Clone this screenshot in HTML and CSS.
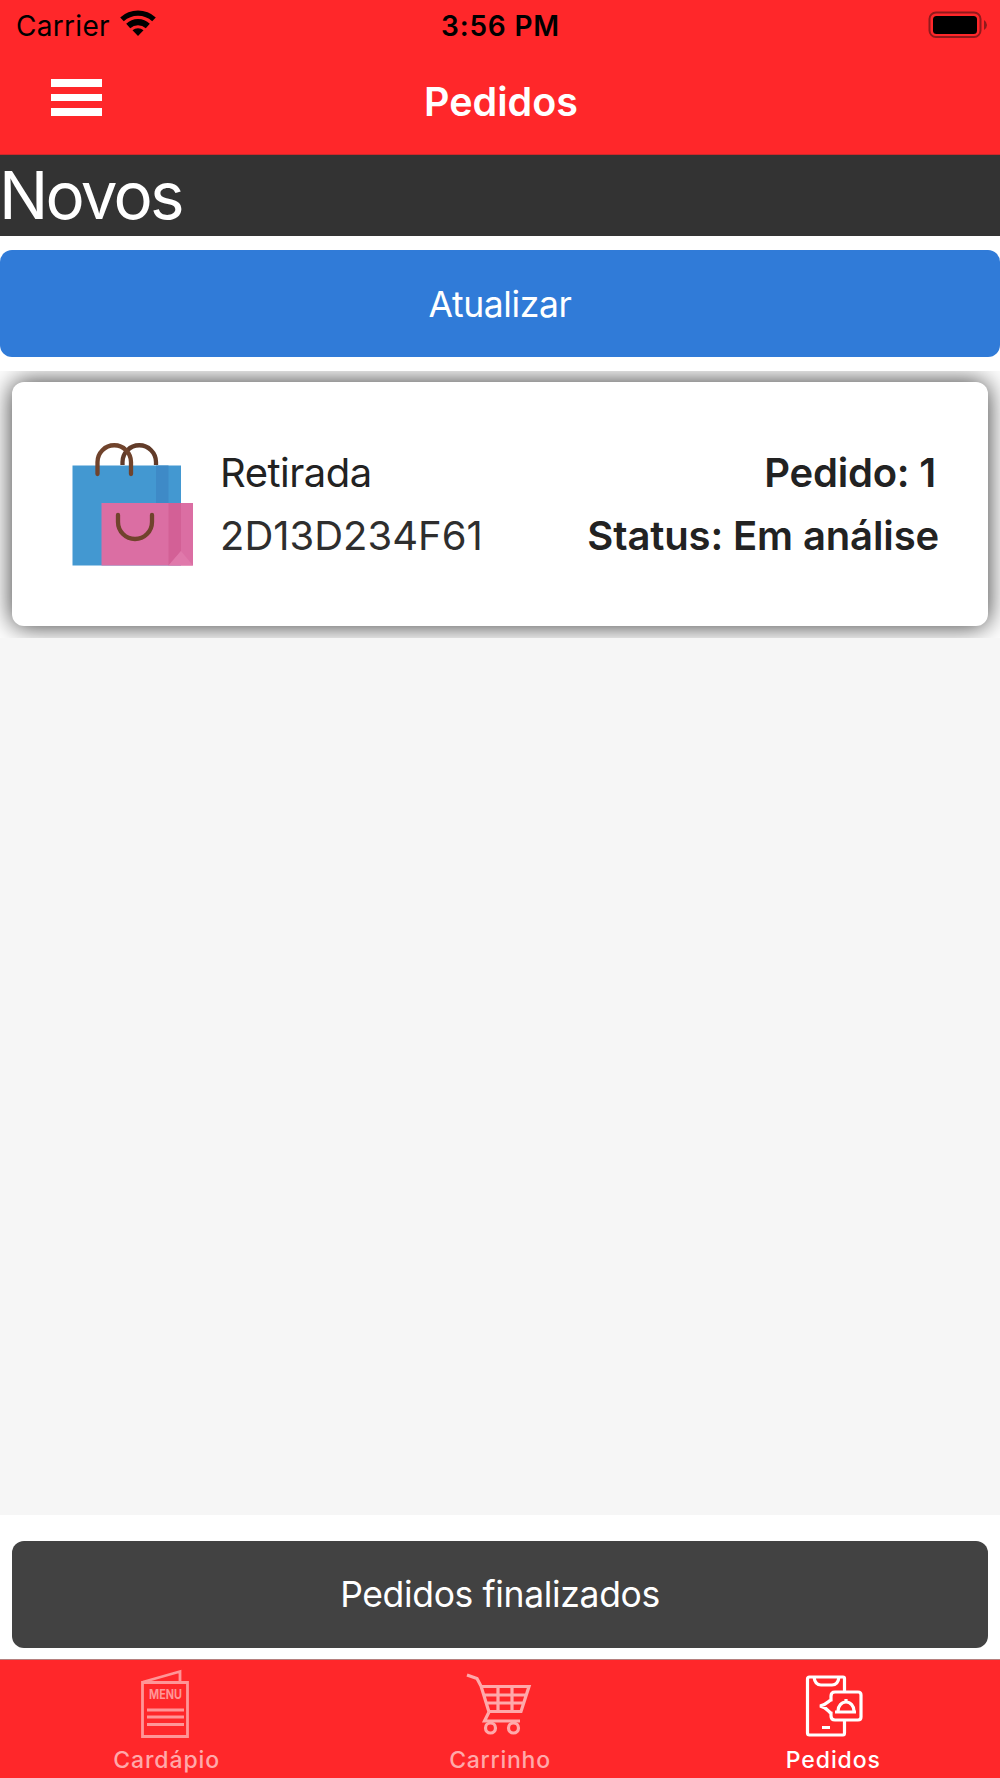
FILE: index.html
```html
<!DOCTYPE html>
<html lang="pt-BR">
<head>
<meta charset="utf-8">
<title>Pedidos</title>
<link rel="stylesheet" href="styles.css">
</head>
<body>
<div class="app">
  <header class="header">
    <div class="status">
      <div class="network"><span class="carrier">Carrier</span>
        <svg class="wifi" viewBox="0 0 38 28" width="38" height="28"><path d="M1.2 8.5A26 26 0 0 1 36.8 8.5L33.2 12.300A21 21 0 0 0 4.800 12.300ZM7.2 14.8A17 17 0 0 1 30.800 14.800L26.800 19.200A12 12 0 0 0 11.200 19.200ZM13.500 21.300A8.300 8.300 0 0 1 24.500 21.300L19 27Z"/></svg>
      </div>
      <span class="time">3:56 PM</span>
      <svg class="battery" viewBox="0 0 60 28" width="60" height="28"><rect x="1.500" y="1.500" width="51" height="24.500" rx="6.500" fill="none" stroke="#901a1c" stroke-width="2"/><rect x="5" y="5" width="44" height="18" rx="3.500"/><path d="M56 9Q59 11 59 14Q59 17 56 19Z" fill="#901a1c"/></svg>
    </div>
    <div class="navbar">
      <button class="menu" aria-label="Menu"><span></span><span></span><span></span></button>
      <h1 class="title">Pedidos</h1>
    </div>
  </header>
  <h2 class="section">Novos</h2>
  <div class="refresh"><button class="button primary">Atualizar</button></div>
  <main class="list">
    <div class="cell">
      <article class="card">
        <svg class="bags" viewBox="0 0 122 123" width="122" height="123">
          <path fill="#4398d1" d="M.5 22.500H109V122.500H.5Z"/><path fill="#3e8ac7" d="M84 22.500H96.500V61H84Z"/>
          <path class="handle dark" d="M50.500 22V19A16.700 16.700 0 0 1 84 19V22"/>
          <path class="handle" d="M25.500 31V19A16.700 16.700 0 0 1 59 19V31"/>
          <path fill="#db6ea3" d="M29.500 60H121V122.500H29.500Z"/><path fill="#d36096" d="M96.500 60H109V108L96.500 122.500Z"/><path fill="#e079ab" d="M96.500 122.500L109 108L121 122.500Z"/>
          <path class="handle" d="M46 72V79A17 17 0 0 0 80 79V72"/>
        </svg>
        <div class="info"><span class="kind">Retirada</span><span class="code">2D13D234F61</span></div>
        <div class="info state"><strong class="number">Pedido: 1</strong><strong class="progress">Status: Em análise</strong></div>
      </article>
    </div>
  </main>
  <footer class="actions"><button class="button secondary">Pedidos finalizados</button></footer>
  <nav class="tabs">
    <a class="tab catalog"><svg viewBox="0 0 64 68" width="64" height="68">
      <path d="M9.500 14.500H54.500V68.500H9.500ZM10 14L47 3.500V14M14 42H51M14 49H51M14 56.500H51"/><text x="16" y="31" textLength="33" lengthAdjust="spacingAndGlyphs">MENU</text></svg><span>Cardápio</span></a>
    <a class="tab cart"><svg viewBox="0 0 64 68" width="64" height="68">
      <path d="M0 7L10 10.500L14 18L22 44M14 18.500H62L54 43.500H22M17 27H59M19 35H56M31 18V43M45 18V43M22 44L17.500 53H53"/><circle cx="23.500" cy="60" r="5"/><circle cx="46.500" cy="60" r="5"/></svg><span>Carrinho</span></a>
    <a class="tab active"><svg viewBox="0 0 64 68" width="64" height="68">
      <path d="M43.500 24V10.500Q43.500 9 42 9H8.500Q6.500 9 6.500 11V65Q6.500 67 8.500 67H42Q43.500 67 43.500 65V52M13 9Q14 17 20 17H31Q37 17 38 9M21 59.500H29M34 24H57Q60 24 60 27V49Q60 52 57 52H34Q30 52 30 48V45C27 44 27 40 19 38C27 36 27 33 30 32V28Q30 24 34 24ZM34 44H55M37 43A8 9 0 0 1 53 43M45 34V31"/></svg><span>Pedidos</span></a>
  </nav>
</div>
</body>
</html>
```
FILE: styles.css
```css
* { box-sizing: border-box; }
body { margin: 0; font-family: Inter, "Liberation Sans", sans-serif; color: #222; background: #fff; }
button { border: 0; padding: 0; font: inherit; color: #fff; }
svg { overflow: visible; }
.app { display: flex; flex-direction: column; height: 1778px; width: 1000px; }
.header { height: 155px; background: #ff272a; border-bottom: 1px solid #cc292b; }
.status { height: 50px; display: grid; grid-template-columns: 1fr auto 1fr; align-items: center; padding: 1px 12px 0 16px; color: #000; font-size: 28px; line-height: 34px; }
.network { display: flex; align-items: center; gap: 9px; }
.wifi { display: block; margin-bottom: 5px; }
.carrier { letter-spacing: .3px; }
.time { font-weight: 600; letter-spacing: .8px; margin-right: 3px; }
.battery { justify-self: end; margin-bottom: 2px; }
.navbar { height: 104px; display: grid; grid-template-columns: 1fr auto 1fr; align-items: center; }
.menu { display: grid; gap: 7px; width: 51px; margin: 0 0 9px 51px; background: none; }
.menu span { height: 7.500px; background: #fff; }
.title { margin: 0; padding-left: 2px; color: #fff; font-size: 39.500px; font-weight: 600; line-height: 48px; }
.section { height: 81px; margin: 0; background: #333; color: #fff; font-size: 65.500px; font-weight: 400; line-height: 81px; letter-spacing: -2.800px; text-indent: -1px; }
.refresh { height: 135px; padding: 14px 0; }
.button { display: block; width: 100%; height: 107px; border-radius: 12px; font-size: 35.500px; }
.primary { background: #307bd8; letter-spacing: -.4px; padding-top: 1px; }
.secondary { background: #424242; letter-spacing: -.35px; }
.list { flex: 1; background: #f6f6f6; }
.cell { height: 267px; padding: 11px 12px; overflow: hidden; background: #fff; }
.card { height: 244px; border-radius: 12px; background: #fff; box-shadow: 0 0 26px rgba(0, 0, 0, .8); display: flex; padding: 59px 49px 0 60px; }
.bags { margin: 2px 26px 0 0; flex: none; }
.handle { fill: none; stroke: #70432c; stroke-width: 4.300px; stroke-linecap: round; }
.dark { stroke: #613b29; stroke-linecap: butt; }
.info { display: flex; flex-direction: column; font-size: 40px; line-height: 63px; }
.kind { letter-spacing: -.5px; }
.state { margin-left: auto; text-align: right; }
.state strong { font-weight: 600; }
.number { letter-spacing: -.2px; padding-right: 3px; }
.progress { letter-spacing: -.13px; }
.code { color: #2e2e2e; }
.actions { height: 144px; padding: 26px 12px 0; background: #fff; }
.tabs { height: 119px; display: grid; grid-template-columns: repeat(3, 1fr); background: #ff272a; border-top: 1px solid #b5807f; }
.tab { display: flex; flex-direction: column; align-items: center; gap: 9px; padding-top: 8px; color: #ffa9aa; font-size: 23px; font-weight: 500; line-height: 30px; letter-spacing: .9px; }
.tab svg { fill: none; stroke: currentColor; stroke-width: 3.200px; }
.tab text { fill: currentColor; stroke: none; font-size: 13px; font-weight: 700; letter-spacing: 0; }
.catalog svg { margin-right: 4px; stroke-width: 2.800px; opacity: .85; }
.cart { letter-spacing: .75px; }
.cart svg { margin-right: 2px; }
.active { color: #fff; }
```
